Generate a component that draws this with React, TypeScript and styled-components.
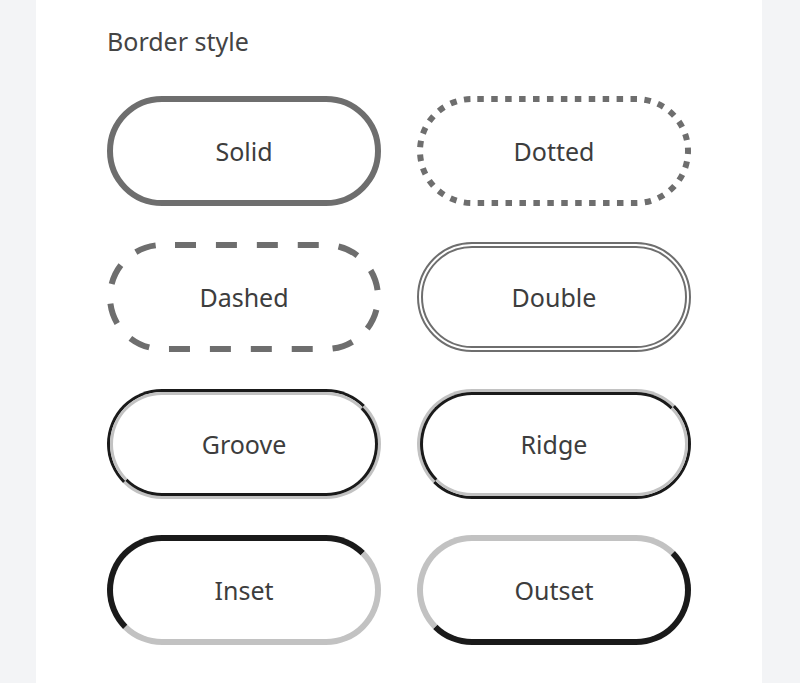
import React from 'react'
import styled, { createGlobalStyle, css } from 'styled-components'

const GlobalStyle = createGlobalStyle`
    html, body {
        margin: 0;
        padding: 0;
        background: #f3f4f6;
        font-family: "Noto Sans", "Open Sans", sans-serif;
    }
`

const Page = styled.div`
    display: flex;
    padding-left: 36px;
    min-height: 683px;
`

const Panel = styled.section`
    width: 726px;
    background: #ffffff;
    padding: 25px 71px 40px;
    box-sizing: border-box;
`

const Title = styled.h2`
    margin: 0 0 39px;
    font-size: 25px;
    line-height: 32px;
    font-weight: 400;
    color: #444444;
`

const Grid = styled.div`
    display: grid;
    grid-template-columns: 274px 274px;
    column-gap: 36px;
    row-gap: 36.4px;
`

type Kind = 'solid' | 'dotted' | 'dashed' | 'double' | 'groove' | 'ridge' | 'inset' | 'outset'

const DARK = '#1a1a1a'
const LIGHT = '#c2c2c2'
const GREY = '#6e6e6e'

const PILL_W = 274
const PILL_H = 110

const ringStyles: Record<Kind, ReturnType<typeof css>> = {
    solid: css`border: 6px solid ${GREY};`,
    dotted: css`border: 6px solid transparent;`,
    dashed: css`border: 6px solid transparent;`,
    double: css`border: 6px double ${GREY};`,
    groove: css`
        border: 3px solid;
        border-color: ${DARK} ${LIGHT} ${LIGHT} ${DARK};
    `,
    ridge: css`
        border: 3px solid;
        border-color: ${LIGHT} ${DARK} ${DARK} ${LIGHT};
    `,
    inset: css`
        border: 6px solid;
        border-color: ${DARK} ${LIGHT} ${LIGHT} ${DARK};
    `,
    outset: css`
        border: 6px solid;
        border-color: ${LIGHT} ${DARK} ${DARK} ${LIGHT};
    `,
}

const Pill = styled.div<{ $kind: Kind }>`
    position: relative;
    display: flex;
    height: ${PILL_H}px;
    box-sizing: border-box;
    border-radius: 55px;
    background: #ffffff;
    ${(p) => ringStyles[p.$kind]}
`

const Inner = styled.div<{ $kind: Kind }>`
    flex: 1;
    display: flex;
    align-items: center;
    justify-content: center;
    border-radius: 52px;
    font-size: 25px;
    color: #3d3d3d;
    ${(p) =>
        p.$kind === 'groove' &&
        css`
            border: 3px solid;
            border-color: ${LIGHT} ${DARK} ${DARK} ${LIGHT};
        `}
    ${(p) =>
        p.$kind === 'ridge' &&
        css`
            border: 3px solid;
            border-color: ${DARK} ${LIGHT} ${LIGHT} ${DARK};
        `}
`

const RingArt = styled.svg`
    position: absolute;
    top: -6px;
    left: -6px;
    pointer-events: none;
`

// square dots / long dashes drawn along the pill outline
const BrokenRing: React.FC<{ kind: 'dotted' | 'dashed' }> = ({ kind }) => {
    const w = PILL_W - 6
    const h = PILL_H - 6
    const r = h / 2
    const perimeter = 2 * (w - h) + Math.PI * h
    const periods = kind === 'dotted' ? 47 : 16
    const period = perimeter / periods
    const dash = kind === 'dotted' ? 6.5 : 21
    const offset = kind === 'dotted' ? period - 5.3 : period - 13
    return (
        <RingArt width={PILL_W} height={PILL_H} viewBox={`0 0 ${PILL_W} ${PILL_H}`}>
            <rect
                x={3}
                y={3}
                width={w}
                height={h}
                rx={r}
                fill="none"
                stroke={GREY}
                strokeWidth={6}
                strokeDasharray={`${dash} ${period - dash}`}
                strokeDashoffset={offset}
            />
        </RingArt>
    )
}

const items: { kind: Kind; label: string }[] = [
    { kind: 'solid', label: 'Solid' },
    { kind: 'dotted', label: 'Dotted' },
    { kind: 'dashed', label: 'Dashed' },
    { kind: 'double', label: 'Double' },
    { kind: 'groove', label: 'Groove' },
    { kind: 'ridge', label: 'Ridge' },
    { kind: 'inset', label: 'Inset' },
    { kind: 'outset', label: 'Outset' },
]

const App: React.FunctionComponent = () => {
    return (
        <Page>
            <GlobalStyle />
            <Panel>
                <Title>Border style</Title>
                <Grid>
                    {items.map((item) => (
                        <Pill key={item.kind} $kind={item.kind}>
                            {(item.kind === 'dotted' || item.kind === 'dashed') && (
                                <BrokenRing kind={item.kind} />
                            )}
                            <Inner $kind={item.kind}>{item.label}</Inner>
                        </Pill>
                    ))}
                </Grid>
            </Panel>
        </Page>
    )
}

export default App
